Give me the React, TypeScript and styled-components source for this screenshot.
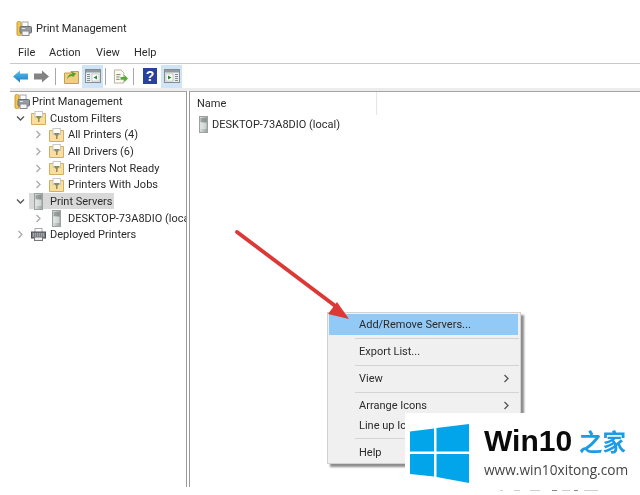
import React from "react";
import styled, { createGlobalStyle } from "styled-components";

const Global = createGlobalStyle`
  html, body { margin: 0; padding: 0; background: #fff; }
  #root { width: 640px; height: 495px; }
`;

const Page = styled.div`
  position: relative;
  width: 640px;
  height: 495px;
  overflow: hidden;
  background: #fff;
  color: #2b2b2b;
  font-family: Roboto, "Open Sans", "Liberation Sans", sans-serif;
  font-size: 11px;
`;
const Window = styled.div`
  display: flex;
  flex-direction: column;
  height: 100%;
  filter: blur(0.3px);
`;
const TitleBar = styled.div`
  display: flex;
  align-items: center;
  gap: 4px;
  height: 44px;
  padding: 16px 0 4px 16px;
  box-sizing: border-box;
`;
const MenuBar = styled.div`
  display: flex;
  height: 19px;
  align-items: center;
  padding: 0 0 2px 18px;
  box-sizing: border-box;
`;
const MenuLabel = styled.span<{ $w: number }>`
  width: ${(p) => p.$w}px;
`;
const Toolbar = styled.div`
  display: flex;
  align-items: center;
  height: 25px;
  margin-left: 10px;
  padding-left: 3px;
  border-top: 1px solid #c9c9c9;
  box-sizing: border-box;
  background: #fff;
`;
const Tool = styled.div<{ $gap: number; $active?: boolean }>`
  display: flex;
  align-items: center;
  justify-content: center;
  margin-left: ${(p) => p.$gap}px;
  width: ${(p) => (p.$active ? 21 : 15)}px;
  height: ${(p) => (p.$active ? 23 : 17)}px;
  background: ${(p) => (p.$active ? "#cfe5f7" : "transparent")};
`;
const ToolSep = styled.div<{ $gap: number }>`
  margin-left: ${(p) => p.$gap}px;
  width: 1px;
  height: 17px;
  background: #a8a8a8;
`;
const Band = styled.div`
  height: 3px;
  margin-left: 10px;
  background: #ececec;
`;
const Panes = styled.div`
  display: flex;
  height: 396px;
  margin-left: 10px;
`;
const TreePane = styled.div`
  width: 176px;
  border-top: 1px solid #a5a5a5;
  border-right: 1px solid #9a9a9a;
  padding-top: 1px;
  overflow: hidden;
`;
const ListPane = styled.div`
  flex: 1;
  margin-left: 2px;
  border-top: 1px solid #a5a5a5;
  border-left: 1px solid #9a9a9a;
`;
const ListHeader = styled.div`
  display: flex;
  align-items: center;
  height: 23px;
  width: 187px;
  padding: 0 0 0 7px;
  box-sizing: border-box;
  border-right: 1px solid #e6e6e6;
`;
const ListRow = styled.div`
  display: flex;
  align-items: center;
  gap: 4px;
  height: 18px;
  padding-left: 9px;
  white-space: nowrap;
`;
const TreeRow = styled.div<{ $indent: number }>`
  display: flex;
  align-items: center;
  height: 16.7px;
  padding-left: ${(p) => p.$indent}px;
  white-space: nowrap;
`;
const Twist = styled.div`
  display: flex;
  align-items: center;
  justify-content: center;
  width: 11px;
  height: 100%;
  margin-right: 5px;
  flex: none;
`;
const Node = styled.div<{ $selected?: boolean; $gap: number }>`
  display: flex;
  align-items: center;
  gap: ${(p) => p.$gap}px;
  height: 16px;
  margin-left: ${(p) => (p.$selected ? -2 : 0)}px;
  padding: ${(p) => (p.$selected ? "0 2px 0 2px" : "0")};
  background: ${(p) => (p.$selected ? "#d9d9d9" : "transparent")};
`;
const IconSlot = styled.div`
  display: flex;
  justify-content: center;
  width: 15px;
  flex: none;
`;
const Menu = styled.div`
  position: absolute;
  left: 327px;
  top: 312px;
  width: 194px;
  box-sizing: border-box;
  padding: 1px;
  background: #f0f0f0;
  border: 1px solid #d2d2d2;
  box-shadow: 3px 3px 2px #8c8c8c;
  filter: blur(0.25px);
`;
const MenuItem = styled.div<{ $hot?: boolean; $short?: boolean }>`
  display: flex;
  align-items: center;
  justify-content: space-between;
  height: ${(p) => (p.$short ? 20 : 21)}px;
  margin-right: 1px;
  padding: 0 7px 0 30px;
  background: ${(p) => (p.$hot ? "#91c9f7" : "transparent")};
`;
const MenuSep = styled.div<{ $h?: number }>`
  display: flex;
  align-items: center;
  height: ${(p) => p.$h ?? 6}px;
  padding-left: 26px;
  &::after {
    content: "";
    flex: 1;
    height: 1px;
    background: #d4d4d4;
  }
`;
const ArrowLayer = styled.svg`
  position: absolute;
  left: 230px;
  top: 225px;
`;
const Watermark = styled.div`
  position: absolute;
  left: 405px;
  top: 413px;
  width: 235px;
  height: 82px;
  background: #fff;
  display: flex;
  padding: 11px 0 0 5px;
  box-sizing: border-box;
`;
const Brand = styled.div`
  margin-left: 14px;
  display: flex;
  flex-direction: column;
`;
const BrandTop = styled.div`
  display: flex;
  align-items: baseline;
  gap: 7px;
  height: 32px;
`;
const BrandName = styled.span`
  font-family: "Liberation Sans", Arial, sans-serif;
  font-weight: 700;
  font-size: 30px;
  line-height: 34px;
  color: #0a0a0a;
`;
const BrandCn = styled.span`
  font-family: "Noto Sans CJK SC", sans-serif;
  font-weight: 700;
  font-size: 23.5px;
  line-height: 34px;
  color: #1d9ce5;
`;
const BrandUrl = styled.div`
  margin-top: 5px;
  font-family: "Open Sans", sans-serif;
  font-size: 13.7px;
  line-height: 18px;
  color: #444;
  white-space: nowrap;
`;
const Scraps = styled.svg`
  position: absolute;
  left: 95px;
  top: 75px;
`;

const Chevron = ({ open, dark }: { open?: boolean; dark?: boolean }) => (
  <svg width="9" height="9" viewBox="0 0 9 9" fill="none" stroke={open || dark ? "#555" : "#a9a9a9"} strokeWidth="1.3">
    {open ? <path d="M1 2.5 L4.5 6 L8 2.5" /> : <path d="M2.5 1 L6 4.5 L2.5 8" />}
  </svg>
);

const PrinterIcon = () => (
  <svg width="16" height="17" viewBox="0 0 16 17">
    <rect x="1" y="1.5" width="4" height="14" rx="1.5" fill="#f3c64c" stroke="#c49a36" />
    <rect x="6" y="2" width="6" height="5" fill="#fff" stroke="#a5a5a5" />
    <rect x="4" y="6.5" width="11.5" height="6.5" rx="1" fill="#979ca3" stroke="#6a6e74" />
    <rect x="6" y="11" width="7" height="4.5" fill="#f5f5f5" stroke="#888" />
    <rect x="6" y="8" width="3" height="1" fill="#dfe5ea" />
  </svg>
);
const FilterFolder = () => (
  <svg width="15" height="14" viewBox="0 0 15 14">
    <path d="M.5 2.5 H4 L5 1 H10 V2.5 H14.5 V13.5 H.5 Z" fill="#f8e09c" stroke="#d3ad60" />
    <rect x="4" y=".5" width="7.5" height="6" fill="#fff" stroke="#c8c8c8" />
    <path d="M4.5 5 H11 L8.5 8 V11 H7 V8 Z" fill="#8e8e5c" />
  </svg>
);
const ServerIcon = () => (
  <svg width="9" height="17" viewBox="0 0 9 17">
    <defs>
      <linearGradient id="srv" x1="0" x2="1" y1="0" y2="0">
        <stop offset="0" stopColor="#e0e3e3" />
        <stop offset="1" stopColor="#98a09e" />
      </linearGradient>
    </defs>
    <rect x=".5" y=".5" width="8" height="16" fill="url(#srv)" stroke="#9aa19f" />
    <path d="M1.5 3 H7.5 M1.5 5 H7.5" stroke="#6d7573" />
    <path d="M1.5 8 H7.5 M1.5 10 H7.5 M1.5 12 H7.5" stroke="#f2f4f4" />
  </svg>
);
const DeployedIcon = () => (
  <svg width="15" height="13" viewBox="0 0 15 13">
    <rect x="4" y=".5" width="7" height="4" fill="#fff" stroke="#aaa" />
    <rect x=".5" y="4" width="14" height="6" fill="#7b8087" stroke="#4c5056" />
    <path d="M2 6 H13 M2 8 H13" stroke="#c9ccd0" strokeDasharray="1 1" />
    <rect x="3.5" y="9" width="8" height="3.5" fill="#eee" stroke="#777" />
  </svg>
);
const BackIcon = () => (
  <svg width="15" height="13" viewBox="0 0 15 13">
    <defs>
      <linearGradient id="bk" x1="0" x2="0" y1="0" y2="1">
        <stop offset="0" stopColor="#5fc4ee" />
        <stop offset="1" stopColor="#1878c2" />
      </linearGradient>
    </defs>
    <path d="M0 6.5 L7 .5 V3.5 H15 V9.5 H7 V12.5 Z" fill="url(#bk)" />
  </svg>
);
const ForwardIcon = () => (
  <svg width="15" height="13" viewBox="0 0 15 13">
    <path d="M15 6.5 L8 .5 V3.5 H0 V9.5 H8 V12.5 Z" fill="#838383" />
  </svg>
);
const UpFolderIcon = () => (
  <svg width="15" height="15" viewBox="0 0 15 15">
    <path d="M.5 4 H7 V2.5 H14.5 V14.5 H.5 Z" fill="#f1cf80" stroke="#c49f55" />
    <path d="M3 10 C4 6 6 5 8 5 L7 2.5 L12 4.5 L9 8.5 L8.5 7 C6 7 4.5 8 3 10 Z" fill="#5aa02c" />
  </svg>
);
const PaneIcon = ({ right }: { right?: boolean }) => (
  <svg width="16" height="14" viewBox="0 0 16 14">
    <rect x=".5" y=".5" width="15" height="13" fill="#e9eef0" stroke="#868d8f" />
    <rect x="1" y="1" width="14" height="2.5" fill="#949b9e" />
    {right ? (
      <>
        <rect x="2" y="5" width="7" height="7" fill="#fff" stroke="#a9afb1" strokeWidth=".6" />
        <path d="M4 6.5 L7.5 8.5 L4 10.5 Z" fill="#238a2e" />
        <path d="M11 5.5 H14 M11 7.5 H14 M11 9.5 H14 M11 11.5 H14" stroke="#868d8f" />
      </>
    ) : (
      <>
        <rect x="7" y="5" width="7" height="7" fill="#fff" stroke="#a9afb1" strokeWidth=".6" />
        <path d="M12 6.5 L8.5 8.5 L12 10.5 Z" fill="#238a2e" />
        <path d="M2 5.5 H5 M2 7.5 H5 M2 9.5 H5 M2 11.5 H5" stroke="#868d8f" />
      </>
    )}
  </svg>
);
const ExportIcon = () => (
  <svg width="16" height="15" viewBox="0 0 16 15">
    <path d="M1.5 .5 H8.5 L11.5 3.5 V14.5 H1.5 Z" fill="#fbfaf2" stroke="#b3b097" />
    <path d="M3.5 5.5 H8 M3.5 8 H7 M3.5 10.5 H7" stroke="#77775f" />
    <path d="M8 8 H12 V5.5 L16 9.5 L12 13.5 V11 H8 Z" fill="#57ad3a" />
  </svg>
);
const HelpIcon = () => (
  <svg width="14" height="16" viewBox="0 0 14 16">
    <rect width="14" height="16" fill="#27419c" />
    <text x="7" y="13" textAnchor="middle" fontFamily="Liberation Sans" fontWeight="700" fontSize="14" fill="#fff">?</text>
  </svg>
);
const Logo = () => (
  <svg width="60" height="60" viewBox="0 0 60 60">
    <g fill="#03a5ea">
      <polygon points="0,7.5 24,4.5 24,27.5 0,27.5" />
      <polygon points="26.5,4 59,0 59,27.5 26.5,27.5" />
      <polygon points="0,30 24,30 24,52.5 0,50" />
      <polygon points="26.5,30 59,30 59,59 26.5,53" />
    </g>
  </svg>
);

export default function App() {
  return (
    <Page>
      <Global />
      <Window>
        <TitleBar>
          <PrinterIcon />
          <span>Print Management</span>
        </TitleBar>
        <MenuBar>
          <MenuLabel $w={31}>File</MenuLabel>
          <MenuLabel $w={47}>Action</MenuLabel>
          <MenuLabel $w={38}>View</MenuLabel>
          <MenuLabel $w={30}>Help</MenuLabel>
        </MenuBar>
        <Toolbar>
          <Tool $gap={0}><BackIcon /></Tool>
          <Tool $gap={6}><ForwardIcon /></Tool>
          <ToolSep $gap={6} />
          <Tool $gap={8}><UpFolderIcon /></Tool>
          <Tool $gap={3} $active><PaneIcon /></Tool>
          <ToolSep $gap={2} />
          <Tool $gap={7}><ExportIcon /></Tool>
          <ToolSep $gap={5} />
          <Tool $gap={8}><HelpIcon /></Tool>
          <Tool $gap={4} $active><PaneIcon right /></Tool>
        </Toolbar>
        <Band />
        <Panes>
          <TreePane>
            <TreeRow $indent={4}><Node $gap={2}><PrinterIcon /><span>Print Management</span></Node></TreeRow>
            <TreeRow $indent={5}><Twist><Chevron open /></Twist><Node $gap={4}><FilterFolder /><span>Custom Filters</span></Node></TreeRow>
            <TreeRow $indent={23}><Twist><Chevron /></Twist><Node $gap={4}><FilterFolder /><span>All Printers (4)</span></Node></TreeRow>
            <TreeRow $indent={23}><Twist><Chevron /></Twist><Node $gap={4}><FilterFolder /><span>All Drivers (6)</span></Node></TreeRow>
            <TreeRow $indent={23}><Twist><Chevron /></Twist><Node $gap={4}><FilterFolder /><span>Printers Not Ready</span></Node></TreeRow>
            <TreeRow $indent={23}><Twist><Chevron /></Twist><Node $gap={4}><FilterFolder /><span>Printers With Jobs</span></Node></TreeRow>
            <TreeRow $indent={5}><Twist><Chevron open /></Twist><Node $gap={4} $selected><IconSlot><ServerIcon /></IconSlot><span>Print Servers</span></Node></TreeRow>
            <TreeRow $indent={23}><Twist><Chevron /></Twist><Node $gap={4}><IconSlot><ServerIcon /></IconSlot><span>DESKTOP-73A8DIO (local)</span></Node></TreeRow>
            <TreeRow $indent={5}><Twist><Chevron /></Twist><Node $gap={4}><DeployedIcon /><span>Deployed Printers</span></Node></TreeRow>
          </TreePane>
          <ListPane>
            <ListHeader>Name</ListHeader>
            <ListRow><ServerIcon /><span>DESKTOP-73A8DIO (local)</span></ListRow>
          </ListPane>
        </Panes>
      </Window>

      <Menu>
        <MenuItem $hot>Add/Remove Servers...</MenuItem>
        <MenuSep />
        <MenuItem>Export List...</MenuItem>
        <MenuSep />
        <MenuItem>View<Chevron dark /></MenuItem>
        <MenuSep />
        <MenuItem $short>Arrange Icons<Chevron dark /></MenuItem>
        <MenuItem $short>Line up Icons</MenuItem>
        <MenuSep $h={7} />
        <MenuItem $short>Help</MenuItem>
      </Menu>

      <ArrowLayer width="130" height="100" viewBox="0 0 130 100">
        <path d="M7 7 L108 83" stroke="#dc3838" strokeWidth="4" strokeLinecap="round" />
        <polygon points="119,94 107,77 98,89" fill="#dc3838" />
      </ArrowLayer>

      <Watermark>
        <Logo />
        <Brand>
          <BrandTop>
            <BrandName>Win10</BrandName>
            <BrandCn>之家</BrandCn>
          </BrandTop>
          <BrandUrl>www.win10xitong.com</BrandUrl>
        </Brand>
        <Scraps width="115" height="5" viewBox="0 0 115 5" fill="#d0d0d0">
          <rect x="0" y="2" width="3" height="1" />
          <rect x="14" y="2" width="6" height="1" />
          <rect x="30" y="2" width="10" height="1" />
          <rect x="52" y="2" width="5" height="1" fill="#888" />
          <rect x="62" y="2" width="8" height="1" />
          <rect x="74" y="2" width="4" height="1" fill="#888" />
          <rect x="84" y="2" width="14" height="1" />
        </Scraps>
      </Watermark>
    </Page>
  );
}
